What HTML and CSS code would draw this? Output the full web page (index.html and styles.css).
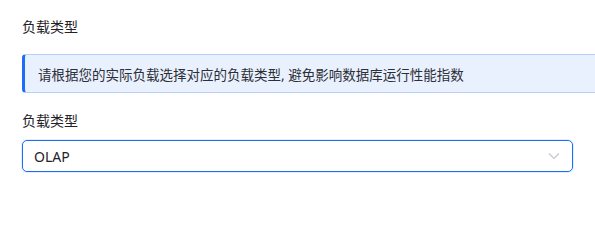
FILE: index.html
```html
<!DOCTYPE html>
<html lang="zh-CN">
<head>
<meta charset="utf-8">
<link rel="stylesheet" href="styles.css">
</head>
<body>
<div class="page">
  <div class="title">负载类型</div>
  <div class="alert">请根据您的实际负载选择对应的负载类型, 避免影响数据库运行性能指数</div>
  <div class="label">负载类型</div>
  <div class="select">
    <span class="value">OLAP</span>
    <svg class="arrow" width="12" height="8" viewBox="0 0 12 8"><path d="M1 1.5 L6 6.5 L11 1.5" fill="none" stroke="#c2c7d0" stroke-width="1.2"/></svg>
  </div>
</div>
</body>
</html>
```
FILE: styles.css
```css
html, body {
  margin: 0;
  padding: 0;
  background: #ffffff;
  overflow: hidden;
}
body {
  font-family: "Noto Sans", "Noto Sans CJK SC", sans-serif;
  font-size: 14px;
  color: #1f2329;
}
.page {
  width: 551px;
  padding: 16px 22px;
}
.title {
  line-height: 22px;
  color: #1f2329;
}
.alert {
  margin-top: 16px;
  margin-right: -22px;
  height: 37px;
  display: flex;
  align-items: center;
  padding-left: 13px;
  background: #eaf1fe;
  border: 1px solid #b8cffa;
  border-right: 0;
  border-left: 3px solid #1b6ef5;
  border-radius: 4px 0 0 4px;
  color: #2b2f36;
  font-size: 13.5px;
}
.label {
  margin-top: 17px;
  line-height: 22px;
  color: #1f2329;
}
.select {
  margin-top: 8px;
  height: 30px;
  display: flex;
  align-items: center;
  justify-content: space-between;
  padding: 0 11px;
  border: 1px solid #1b6ef5;
  border-radius: 5px;
  box-shadow: 0 0 0 1px rgba(27, 110, 245, 0.12);
}
.value {
  color: #1f2329;
}
.arrow {
  margin-right: 1px;
}
```
